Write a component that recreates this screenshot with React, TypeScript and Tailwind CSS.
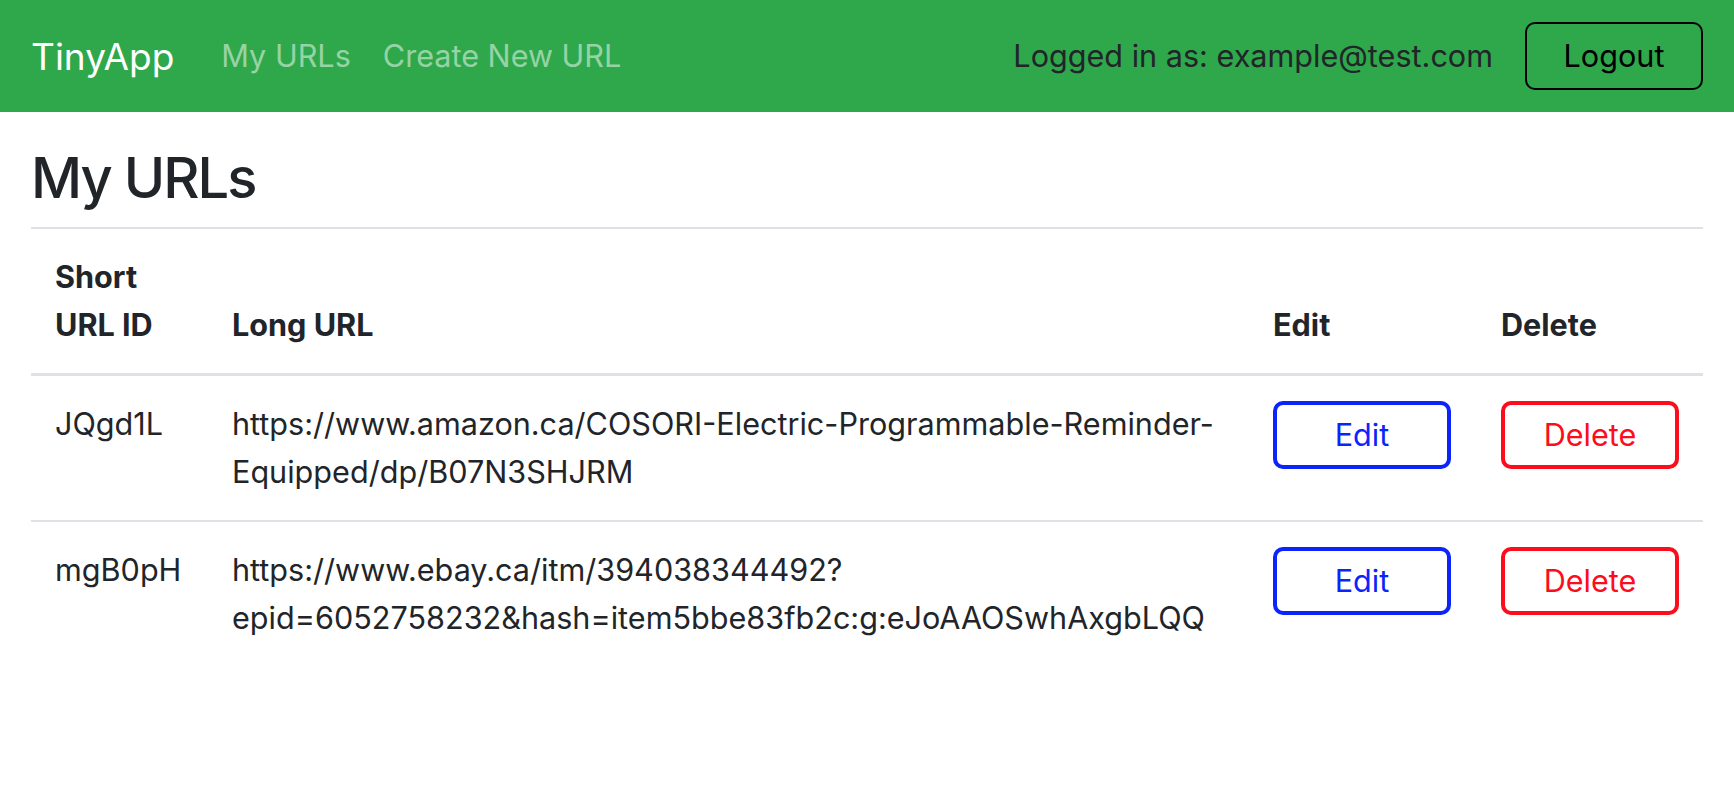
const URLS = [
  {
    id: "JQgd1L",
    lines: [
      "https://www.amazon.ca/COSORI-Electric-Programmable-Reminder-",
      "Equipped/dp/B07N3SHJRM",
    ],
  },
  {
    id: "mgB0pH",
    lines: [
      "https://www.ebay.ca/itm/394038344492?",
      "epid=6052758232&hash=item5bbe83fb2c:g:eJoAAOSwhAxgbLQQ",
    ],
  },
];

function Navbar() {
  return (
    <nav className="flex h-[112px] items-center bg-[#2ea84b] px-[31px]">
      <a className="mr-[31px] text-[37px] leading-none text-white">TinyApp</a>
      <a className="px-[16px] text-[30.6px] text-white/50">My URLs</a>
      <a className="px-[16px] text-[30.6px] text-white/50">Create New URL</a>

      <div className="ml-auto flex items-center gap-[32px]">
        <span className="text-[30.6px] text-[#212529]">
          Logged in as: example@test.com
        </span>
        <button className="h-[68px] w-[178px] rounded-[10px] border-2 border-black text-[30.6px] text-black">
          Logout
        </button>
      </div>
    </nav>
  );
}

export default function App() {
  return (
    <div className="min-h-screen bg-white font-['Inter',sans-serif] text-[#212529]">
      <Navbar />

      <main className="px-[31px]">
        <h1 className="mt-[31px] mb-[14px] text-[56px] leading-[70px] font-medium tracking-[-0.035em]">
          My URLs
        </h1>

        <table className="w-full table-fixed border-collapse text-left text-[30.6px] leading-[48px]">
          <thead>
            <tr>
              <th className="w-[177px] border-t-2 border-b-[3px] border-[#dee2e6] p-[24px] align-bottom font-bold">
                Short URL ID
              </th>
              <th className="border-t-2 border-b-[3px] border-[#dee2e6] p-[24px] align-bottom font-bold">
                Long URL
              </th>
              <th className="w-[228px] border-t-2 border-b-[3px] border-[#dee2e6] p-[24px] align-bottom font-bold">
                Edit
              </th>
              <th className="w-[226px] border-t-2 border-b-[3px] border-[#dee2e6] p-[24px] align-bottom font-bold">
                Delete
              </th>
            </tr>
          </thead>
          <tbody>
            {URLS.map((url) => (
              <tr key={url.id}>
                <td className="border-t-2 border-[#dee2e6] p-[24px] align-top">
                  {url.id}
                </td>
                <td className="border-t-2 border-[#dee2e6] p-[24px] align-top">
                  {url.lines.map((line) => (
                    <div key={line} className="whitespace-nowrap">
                      {line}
                    </div>
                  ))}
                </td>
                <td className="border-t-2 border-[#dee2e6] px-[24px] pt-[25px] align-top">
                  <button className="h-[68px] w-[178px] rounded-[10px] border-4 border-[#0b24fb] text-[30.6px] text-[#0b24fb]">
                    Edit
                  </button>
                </td>
                <td className="border-t-2 border-[#dee2e6] px-[24px] pt-[25px] align-top">
                  <button className="h-[68px] w-[178px] rounded-[10px] border-4 border-[#fd0d1b] text-[30.6px] text-[#fd0d1b]">
                    Delete
                  </button>
                </td>
              </tr>
            ))}
          </tbody>
        </table>
      </main>
    </div>
  );
}
